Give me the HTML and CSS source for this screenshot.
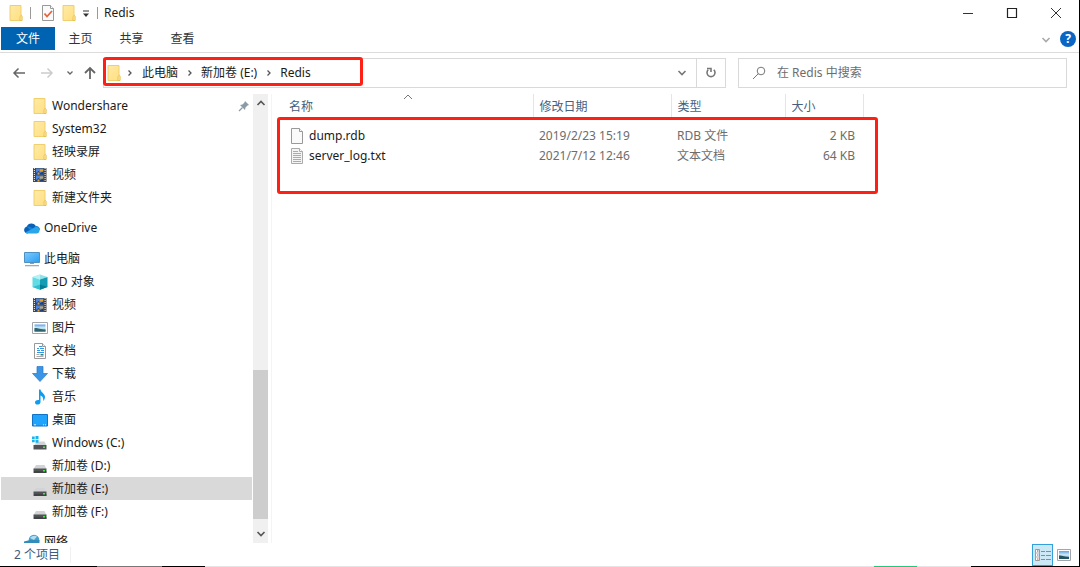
FILE: index.html
```html
<!DOCTYPE html>
<html lang="zh-CN">
<head>
<meta charset="utf-8">
<title>Redis</title>
<link rel="stylesheet" href="styles.css">
</head>
<body>
<svg class="sprite" aria-hidden="true">
  <defs>
    <linearGradient id="gFolder" x1="0" y1="0" x2="1" y2="1"><stop offset="0" stop-color="#ffeaa6"/><stop offset="1" stop-color="#ffdf80"/></linearGradient>
    <linearGradient id="gScreen" x1="0" y1="0" x2="1" y2="1"><stop offset="0" stop-color="#7dcbff"/><stop offset="1" stop-color="#2a9df0"/></linearGradient>
    <linearGradient id="gSky" x1="0" y1="0" x2="0" y2="1"><stop offset="0" stop-color="#5f9fe6"/><stop offset=".5" stop-color="#d6effa"/><stop offset="1" stop-color="#2d6b8a"/></linearGradient>
  </defs>
  <symbol id="folder" viewBox="0 0 16 16"><path d="M2 .5h11v10l.9.8v4.200H2z" fill="url(#gFolder)" stroke="#f0d06e"/><path d="M12 15.500v-4l1.300-1.200.7 1v4.200z" fill="#ffe9a8" stroke="#e5bd45" stroke-width=".8"/></symbol>
  <symbol id="video" viewBox="0 0 16 16"><path d="M1 1h13.500v14H1z" fill="#444"/><path d="M4 1.500h7.500v6H4zM4 8.500h7.500v6H4z" fill="#4a86e0"/><path d="M4 6l2.500-2 2 2 3-2v3.500H4zM4 13l2.500-2 2 2 3-2v3.500H4z" fill="#22407a"/><path d="M8 2.500h3v2H8zM5.500 5.500h2v2h-2zM8 9.500h3v2H8zM5.500 12.500h2v2h-2z" fill="#e1a332"/><path d="M2.400 1v14M13.100 1v14" stroke="#dcdcdc" stroke-width="1.200" stroke-dasharray="1 1"/></symbol>
  <symbol id="cloud" viewBox="0 0 16 16"><path d="M3.500 13.500A3.500 3.500 0 0 1 2.800 6.600 5 5 0 0 1 12 6.300l-3 4z" fill="#0a62b8"/><path d="M2.800 6.700C5 5.800 7 7 9 8.500l3-2.600a3.800 3.800 0 0 1 4 3.800L8 12z" fill="#1382d6"/><path d="M1.200 12.400L8 9l4-2.200a3.400 3.400 0 0 1 1 6.700H3.500c-1 0-1.700-.4-2.300-1.100z" fill="#29a5ea"/></symbol>
  <symbol id="pc" viewBox="0 0 16 16"><path d="M.5 1.500h15v10H.5z" fill="url(#gScreen)" stroke="#4e90bf"/><path d="M6 12h4v1H6z" fill="#8ba0ae"/><path d="M1 14h14v1.300H1z" fill="#9cabb7"/></symbol>
  <symbol id="cube" viewBox="0 0 16 16"><path d="M.5 3L8 .5 15.500 3 8 5.500z" fill="#8fe3ea"/><path d="M.5 3L8 5.500v10.300L.5 13z" fill="#63dbe5"/><path d="M15.500 3L8 5.500v10.300l7.500-2.800z" fill="#149cb4"/><path d="M.5 3L8 .5v5z" fill="#b5f2f5"/><path d="M8 10.500l7.500 2.500L8 15.800z" fill="#077c94"/><path d="M.5 13L8 10.500v5.300z" fill="#2fc0d0"/></symbol>
  <symbol id="picture" viewBox="0 0 16 16"><path d="M.5 2.500h15v11H.5z" fill="#fff" stroke="#a2a6aa"/><path d="M2.500 4.500h11v7h-11z" fill="url(#gSky)"/><path d="M2.500 8c3-.5 5 1 11 1.500v2h-11z" fill="#2c6570"/></symbol>
  <symbol id="document" viewBox="0 0 16 16"><path d="M2.500.5h8l3 3v12h-11z" fill="#fff" stroke="#999"/><path d="M10.500.5v3h3" fill="#eee" stroke="#999"/><path d="M7 3.500h3m-5 2h2m1 0h4m-7 2h3m1 0h3m-7 2h7" stroke="#2f97e4"/><path d="M4.500 11.500h3m-3 2h7" stroke="#aaa"/><path d="M8.500 11h3v1.500h-3z" fill="#357f8e"/></symbol>
  <symbol id="download" viewBox="0 0 16 16"><path d="M5 .5h6v7h4.500L8 15.500.5 7.500H5z" fill="#3b95e6" stroke="#257ac6" stroke-width=".7"/></symbol>
  <symbol id="music" viewBox="0 0 16 16"><path d="M7 .5h1.500c.3 3 4.500 4 4.500 7.500 0 1.500-.8 3-1.800 4 .5-3.500-1-4.800-2.700-5.500V13c0 1.600-1.400 2.600-3 2.600S3 14.700 3 13.300c0-1.500 1.500-2.600 4-2.200z" fill="#0c9cf2"/></symbol>
  <symbol id="desktop" viewBox="0 0 16 16"><path d="M.5 2.500h15v11.500H.5z" fill="#20a3fb" stroke="#1273c5"/><path d="M2 12.800h2m7 0h1m1 0h1" stroke="#d6f0ff"/></symbol>
  <symbol id="drive" viewBox="0 0 16 16"><path d="M4 7h8.500l2 4H1.500z" fill="#d2d3d5"/><path d="M1.500 10.500h13V15h-13z" fill="#505255"/><path d="M2 14h12.500" stroke="#333"/><path d="M11 12h2v1.500h-2z" fill="#42e84a"/></symbol>
  <symbol id="windrive" viewBox="0 0 16 16"><path d="M5 6.500h7.500l2 4H2z" fill="#d2d3d5"/><path d="M1.500 10h13v4.500h-13z" fill="#505255"/><path d="M11 11.500h2V13h-2z" fill="#42e84a"/><path d="M0 1.500h2.700V4H0zM3.500 1h3v3h-3zM0 4.800h2.700v2.500H0zM3.500 4.800h3v3h-3z" fill="#16b5ef"/></symbol>
  <symbol id="network" viewBox="0 0 16 16"><circle cx="10" cy="6" r="5.300" fill="#4b9dcb"/><path d="M6 4c2-2.500 5-3 7-1.500L10 6z" fill="#aedff0"/><path d="M0 7.500l6-1.500h9.500v7H0z" fill="#2f8cbb"/></symbol>
  <symbol id="blank" viewBox="0 0 16 16"><path d="M2.500.5h8l3 3v12h-11z" fill="#fafafa" stroke="#999"/><path d="M10.500.5v3h3" fill="#fff" stroke="#999"/></symbol>
  <symbol id="text" viewBox="0 0 16 16"><path d="M2.500.5h8l3 3v12h-11z" fill="#f4f4f4" stroke="#aaa"/><path d="M10.500.5v3h3" fill="#fff" stroke="#aaa"/><path d="M4 3.500h5M4 5.500h8M4 7.500h8M4 9.500h8M4 11.500h8M4 13.500h8" stroke="#aaa"/></symbol>
  <symbol id="chevron" viewBox="0 0 10 10"><path d="M1.500 3L5 6.500 8.500 3" fill="none" stroke="currentColor" stroke-width="1.600"/></symbol>
  <symbol id="chevronUp" viewBox="0 0 10 10"><path d="M1.500 7L5 3.500 8.500 7" fill="none" stroke="currentColor" stroke-width="1.600"/></symbol>
  <symbol id="crumb" viewBox="0 0 14 14"><path d="M5.500 4.500L8 7 5.500 9.500" fill="none" stroke="currentColor" stroke-width="1.300"/></symbol>
</svg>
<div class="window">
  <header class="titlebar">
    <svg class="icon"><use href="#folder"/></svg>
    <span class="divider"></span>
    <button class="tool" aria-label="属性"><svg class="icon" viewBox="0 0 16 16"><path d="M2.500.5h8l3 3v12h-11z" fill="#fafafa" stroke="#999"/><path d="M10.500.5v3h3" fill="#fff" stroke="#999"/><path d="M4.500 8.500l2.500 3 5-5.500" fill="none" stroke="#e8623a" stroke-width="1.800"/></svg></button>
    <button class="tool" aria-label="新建文件夹"><svg class="icon"><use href="#folder"/></svg></button>
    <button class="tool tool-more" aria-label="自定义快速访问工具栏"><svg class="small" viewBox="0 0 10 10"><path d="M2 3h6" stroke="#333"/><path d="M2 5.500h6L5 9z" fill="#333"/></svg></button>
    <span class="divider"></span>
    <h1 class="title">Redis</h1>
    <div class="captions">
      <button aria-label="最小化"><svg class="cap" viewBox="0 0 12 12"><path d="M1 6.500h10" stroke="#333"/></svg></button>
      <button aria-label="最大化"><svg class="cap" viewBox="0 0 12 12"><path d="M1.500 1.500h9v9h-9z" fill="none" stroke="#222" stroke-width="1.200"/></svg></button>
      <button aria-label="关闭"><svg class="cap" viewBox="0 0 12 12"><path d="M1 1l10 10M11 1L1 11" stroke="#333"/></svg></button>
    </div>
  </header>
  <div class="ribbon">
    <button class="tab tab-file">文件</button>
    <button class="tab">主页</button>
    <button class="tab">共享</button>
    <button class="tab">查看</button>
    <button class="expand" aria-label="展开功能区"><svg class="small"><use href="#chevron"/></svg></button>
    <button class="help" aria-label="帮助">?</button>
  </div>
  <div class="navbar">
    <div class="history">
      <button class="back" aria-label="返回"><svg viewBox="0 0 14 14"><path d="M13 7H2M6.500 2.500L2 7l4.500 4.500" fill="none" stroke="currentColor" stroke-width="1.500"/></svg></button>
      <button class="forward" aria-label="前进"><svg viewBox="0 0 14 14"><path d="M1 7h11M7.500 2.500L12 7l-4.500 4.500" fill="none" stroke="currentColor" stroke-width="1.500"/></svg></button>
      <button class="recent" aria-label="最近浏览的位置"><svg viewBox="0 0 8 8"><path d="M1.500 2.500L4 5l2.500-2.500" fill="none" stroke="currentColor" stroke-width="1.300"/></svg></button>
      <button class="up" aria-label="上移"><svg viewBox="0 0 14 14"><path d="M7 13V2M2 7l5-5 5 5" fill="none" stroke="currentColor" stroke-width="1.800"/></svg></button>
    </div>
    <div class="address">
      <svg class="icon"><use href="#folder"/></svg>
      <svg class="sep"><use href="#crumb"/></svg><a href="#pc">此电脑</a>
      <svg class="sep"><use href="#crumb"/></svg><a href="#e">新加卷 (E:)</a>
      <svg class="sep"><use href="#crumb"/></svg><a href="#redis">Redis</a>
      <button class="drop" aria-label="以前的位置"><svg class="small"><use href="#chevron"/></svg></button>
      <button class="refresh" aria-label="刷新"><svg viewBox="0 0 12 12"><path d="M8.800 2.800a4 4 0 1 1-5.600 0M2 1.500h4V5" fill="none" stroke="currentColor" stroke-width="1.600"/></svg></button>
      <span class="mark mark-address"></span>
    </div>
    <label class="search">
      <svg viewBox="0 0 14 14"><circle cx="9" cy="5" r="3.800" fill="none" stroke="currentColor"/><path d="M6.300 7.700L1 13" stroke="currentColor"/></svg>
      <input type="text" aria-label="搜索" placeholder="在 Redis 中搜索">
    </label>
  </div>
  <div class="content">
    <nav class="tree" aria-label="导航窗格">
      <ul>
        <li><a class="child" href="#w"><svg class="icon"><use href="#folder"/></svg>Wondershare<svg class="pin" viewBox="0 0 12 12"><path d="M7 1l4 4-1.500.5-2 2L7 10 2 5l2.500-.5 2-2z" fill="#8b9aa6"/><path d="M4.500 7.500L1 11" stroke="#8b9aa6" stroke-width="1.300"/></svg></a></li>
        <li><a class="child" href="#s"><svg class="icon"><use href="#folder"/></svg>System32</a></li>
        <li><a class="child" href="#q"><svg class="icon"><use href="#folder"/></svg>轻映录屏</a></li>
        <li><a class="child" href="#v"><svg class="icon"><use href="#video"/></svg>视频</a></li>
        <li><a class="child" href="#n"><svg class="icon"><use href="#folder"/></svg>新建文件夹</a></li>
      </ul>
      <ul>
        <li><a href="#od"><svg class="icon"><use href="#cloud"/></svg>OneDrive</a></li>
      </ul>
      <ul>
        <li><a href="#pc"><svg class="icon"><use href="#pc"/></svg>此电脑</a></li>
        <li><a class="child" href="#3d"><svg class="icon"><use href="#cube"/></svg>3D 对象</a></li>
        <li><a class="child" href="#v2"><svg class="icon"><use href="#video"/></svg>视频</a></li>
        <li><a class="child" href="#p"><svg class="icon"><use href="#picture"/></svg>图片</a></li>
        <li><a class="child" href="#doc"><svg class="icon"><use href="#document"/></svg>文档</a></li>
        <li><a class="child" href="#dl"><svg class="icon"><use href="#download"/></svg>下载</a></li>
        <li><a class="child" href="#m"><svg class="icon"><use href="#music"/></svg>音乐</a></li>
        <li><a class="child" href="#dt"><svg class="icon"><use href="#desktop"/></svg>桌面</a></li>
        <li><a class="child" href="#c"><svg class="icon"><use href="#windrive"/></svg>Windows (C:)</a></li>
        <li><a class="child" href="#d"><svg class="icon"><use href="#drive"/></svg>新加卷 (D:)</a></li>
        <li><a class="child selected" href="#e"><svg class="icon"><use href="#drive"/></svg>新加卷 (E:)</a></li>
        <li><a class="child" href="#f"><svg class="icon"><use href="#drive"/></svg>新加卷 (F:)</a></li>
      </ul>
      <ul>
        <li><a href="#net"><svg class="icon"><use href="#network"/></svg>网络</a></li>
      </ul>
    </nav>
    <div class="scrollbar">
      <button aria-label="向上滚动"><svg class="small"><use href="#chevronUp"/></svg></button>
      <div class="track"><div class="thumb"></div></div>
      <button aria-label="向下滚动"><svg class="small"><use href="#chevron"/></svg></button>
    </div>
    <main class="files">
      <svg class="sort" viewBox="0 0 10 6"><path d="M1 5l4-4 4 4" fill="none" stroke="#777"/></svg>
      <table>
        <colgroup><col class="col-name"><col class="col-date"><col class="col-type"><col class="col-size"></colgroup>
        <thead><tr><th>名称</th><th>修改日期</th><th>类型</th><th>大小</th></tr></thead>
        <tbody>
          <tr><td><span class="file"><svg class="icon"><use href="#blank"/></svg>dump.rdb</span></td><td>2019/2/23 15:19</td><td>RDB 文件</td><td>2 KB</td></tr>
          <tr><td><span class="file"><svg class="icon"><use href="#text"/></svg>server_log.txt</span></td><td>2021/7/12 12:46</td><td>文本文档</td><td>64 KB</td></tr>
        </tbody>
      </table>
      <span class="mark mark-files"></span>
    </main>
  </div>
  <footer class="status">
    <span class="count">2 个项目</span>
    <button class="view view-on" aria-label="详细信息"><svg viewBox="0 0 16 16"><path d="M.5 2.500h4v11h-4z" fill="#fff" stroke="#999"/><path d="M0 6h5M0 10h5" stroke="#aaa"/><path d="M2 4h1.500" stroke="#555"/><path d="M2 8h1.500" stroke="#3b78e8"/><path d="M2 12h1.500" stroke="#e34b39"/><path d="M6 4.500h4m1 0h5M6 8.500h4m1 0h5M6 12.500h4m1 0h5" stroke="#7f8f98"/></svg></button>
    <button class="view" aria-label="大缩略图"><svg viewBox="0 0 16 16"><path d="M1.500 2.500h13v11h-13z" fill="#fff" stroke="#a2a6aa"/><path d="M3 4h10v8H3z" fill="url(#gSky)"/><path d="M3 8.500c3-.5 5 1 10 1.500v2H3z" fill="#245562"/></svg></button>
  </footer>
  <div class="edge"><i class="edge-dark"></i><i class="edge-gray"></i><i class="edge-black"></i><i class="edge-light"></i><i class="edge-green"></i><i class="edge-pale"></i><i class="edge-end"></i></div>
</div>
</body>
</html>
```
FILE: styles.css
```css
* { box-sizing: border-box; }
body {
  margin: 0;
  font: 12px/16px "Noto Sans", "Noto Sans CJK SC", sans-serif;
  color: #1a1a1a;
  background: #fff;
}
button {
  display: flex;
  align-items: center;
  justify-content: center;
  flex: none;
  padding: 0;
  border: 0;
  background: none;
  font: inherit;
  color: inherit;
}
a { color: inherit; text-decoration: none; }
ul { list-style: none; margin: 0; padding: 0; }
svg { display: block; flex: none; }
.sprite { position: absolute; width: 0; height: 0; }
.icon { width: 16px; height: 16px; }
.small { width: 10px; height: 10px; }

.window {
  display: flex;
  flex-direction: column;
  height: 100vh;
  border-right: 1px solid #000;
}

.titlebar {
  display: flex;
  align-items: center;
  flex: none;
  height: 27px;
  padding: 0 1px 2px 8px;
}
.divider { width: 1px; height: 12px; margin: 0 6px; background: #999; }
.tool { width: 21px; height: 20px; }
.tool-more { width: 14px; }
.title { margin: 0; font-size: 12px; font-weight: 400; line-height: 16px; }
.tool-more + .divider { margin: 0 6px 0 4px; }
.captions { display: flex; margin-left: auto; }
.captions button { width: 44px; height: 24px; }
.cap { width: 12px; height: 12px; }

.ribbon {
  display: flex;
  align-items: flex-start;
  flex: none;
  height: 26px;
  padding: 0 1px;
  border-bottom: 1px solid #dcdcdc;
}
.tab { width: 51px; height: 23px; color: #333; }
.tab-file { width: 54px; background: #0063b1; color: #fff; }
.expand { width: 20px; height: 25px; margin-left: auto; color: #aaa; }
.help {
  width: 16px;
  height: 16px;
  margin: 4px 2px 0 4px;
  border-radius: 50%;
  background: #0b66c3;
  color: #fff;
  font-weight: 700;
}

.navbar {
  display: flex;
  flex: none;
  gap: 12px;
  padding: 5px 12px 6px 0;
}
.history {
  display: flex;
  align-items: center;
  width: 91px;
  padding-left: 12px;
  color: #666;
}
.history svg { width: 14px; height: 14px; }
.history .recent svg { width: 8px; height: 8px; }
.forward { margin-left: 14px; color: #ccc; }
.recent { margin-left: 12px; }
.up { margin-left: 9px; }
.address {
  position: relative;
  display: flex;
  align-items: center;
  flex: 1;
  height: 30px;
  padding-left: 2px;
  border: 1px solid #d9d9d9;
}
.sep { width: 14px; height: 14px; margin: 0 4px 0 5px; color: #555; }
.address .icon + .sep { margin: 0 5px 0 1px; }
.drop { width: 28px; height: 28px; margin-left: auto; color: #777; }
.refresh { width: 29px; height: 28px; border-left: 1px solid #d9d9d9; color: #777; }
.refresh svg { width: 12px; height: 12px; }
.search {
  display: flex;
  align-items: center;
  width: 329px;
  height: 30px;
  padding-left: 13px;
  border: 1px solid #d9d9d9;
  color: #777;
}
.search svg { width: 14px; height: 14px; }
.search input {
  flex: 1;
  min-width: 0;
  margin-left: 11px;
  padding: 0;
  border: 0;
  outline: 0;
  background: none;
  font: inherit;
}
.search input::placeholder { color: #6d6d6d; opacity: 1; }

.mark {
  position: absolute;
  border: 3px solid #ff2015;
  border-radius: 3px;
  pointer-events: none;
}
.mark-address { top: -2px; left: -1px; width: 260px; height: 29px; }
.mark-files { top: 23px; left: 5px; width: 601px; height: 77px; }

.content { display: flex; flex: 1; min-height: 0; }
.tree { width: 252px; padding-left: 1px; overflow: hidden; }
.tree ul { margin-bottom: 7px; }
.tree ul:nth-child(2) { margin-bottom: 8px; }
.tree a {
  display: flex;
  align-items: center;
  gap: 4px;
  height: 23px;
  padding-left: 23px;
}
.tree .child { padding-left: 31px; }
.tree .selected { background: #d9d9d9; }
.pin { width: 12px; height: 12px; margin: 0 2px 0 auto; }
.scrollbar {
  display: flex;
  flex-direction: column;
  flex: none;
  width: 15px;
  margin-left: 1px;
  background: #f0f0f0;
  color: #555;
}
.scrollbar button { width: 15px; height: 18px; }
.track { display: flex; flex-direction: column; justify-content: flex-end; flex: 1; }
.thumb { height: 36%; margin-bottom: 6px; background: #cdcdcd; }

.files {
  position: relative;
  flex: 1;
  margin-left: 3px;
  padding-left: 10px;
  border-left: 1px solid #f4f4f4;
}
.sort { position: absolute; top: 0; left: 131px; width: 10px; height: 6px; }
table { border-collapse: collapse; table-layout: fixed; width: 581px; }
.col-name { width: 251px; }
.col-date { width: 138px; }
.col-type { width: 114px; }
.col-size { width: 78px; }
th {
  height: 23px;
  padding: 3px 0 0 6px;
  border-right: 1px solid #e5e5e5;
  font-weight: 400;
  text-align: left;
  color: #46607e;
}
th:first-child, td:first-child { padding-left: 7px; }
tbody::before { content: ""; display: table-row; height: 9px; }
td { height: 20px; padding: 0 0 0 6px; color: #6d6d6d; white-space: nowrap; }
td:last-child { padding-right: 8px; text-align: right; }
.file { display: flex; align-items: center; gap: 4px; color: #1a1a1a; }

.status {
  display: flex;
  align-items: center;
  flex: none;
  height: 23px;
  padding: 0 5px 0 14px;
}
.count { margin-right: auto; padding-right: 10px; border-right: 1px solid #f0f0f0; color: #3c5c7e; }
.view { width: 21px; height: 22px; border: 1px solid transparent; }
.view svg { width: 16px; height: 16px; }
.view-on { border-color: #33a0da; background: #cce8f6; }

.edge { display: flex; flex: none; height: 1px; }
.edge-dark { width: 9%; background: #000; }
.edge-gray { width: 6%; background: #777; }
.edge-black { width: 4%; background: #000; }
.edge-light { flex: 1; background: #e4e4e4; }
.edge-green { width: 4%; background: #20c878; }
.edge-pale { width: 5%; background: #e4e4e4; }
.edge-end { width: 10%; background: #000; }
```
